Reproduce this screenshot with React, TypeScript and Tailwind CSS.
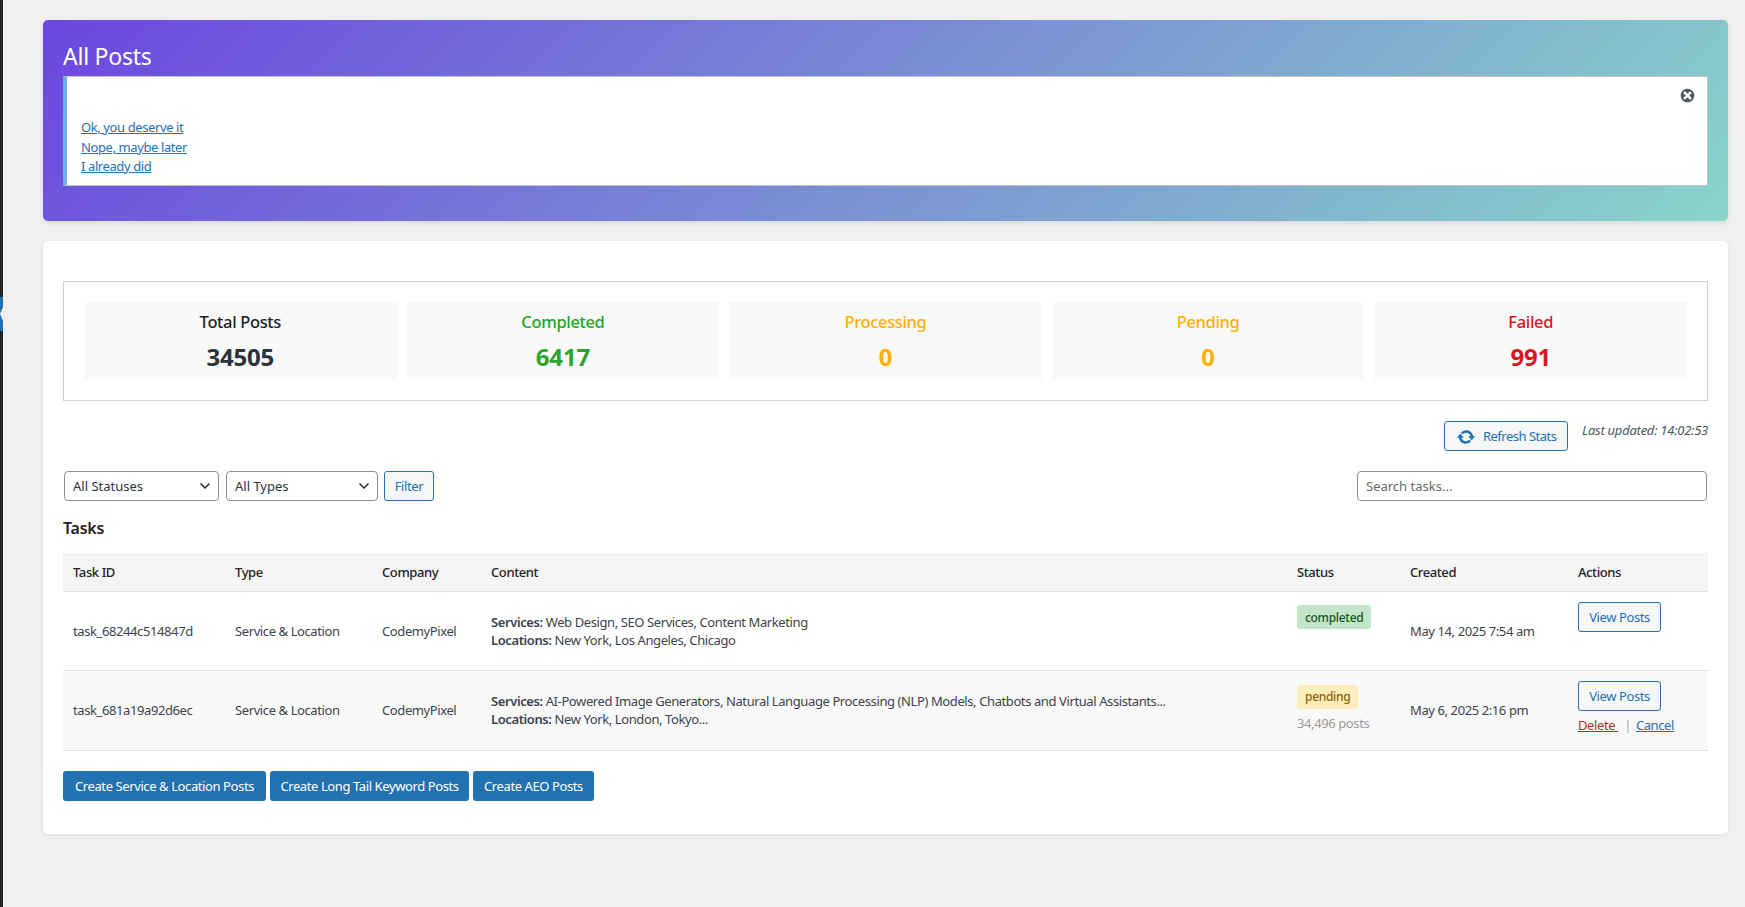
import React from "react";
import { ChevronDown } from "lucide-react";

const stats = [
  { label: "Total Posts", value: "34505", labelClass: "text-[#1d2327]", valueClass: "text-[#2c3338]" },
  { label: "Completed", value: "6417", labelClass: "text-[#1fa51f]", valueClass: "text-[#2ca52f]" },
  { label: "Processing", value: "0", labelClass: "text-[#ffb000]", valueClass: "text-[#ffb000]" },
  { label: "Pending", value: "0", labelClass: "text-[#ffb000]", valueClass: "text-[#ffb000]" },
  { label: "Failed", value: "991", labelClass: "text-[#d9161f]", valueClass: "text-[#d9161f]" },
];

const Select = ({ label, className }: { label: string; className: string }) => (
  <div className={`relative ${className}`}>
    <select className="h-[30px] w-full appearance-none rounded-[4px] border border-[#8c8f94] bg-white pl-2 pr-6 pt-px text-[13px] tracking-normal text-[#2c3338]">
      <option>{label}</option>
    </select>
    <ChevronDown className="pointer-events-none absolute right-[6px] top-[7px] h-4 w-4 text-[#2c3338]" strokeWidth={2.5} />
  </div>
);

const OutlineButton = ({ children, className = "" }: { children: React.ReactNode; className?: string }) => (
  <button className={`rounded-[3px] border border-[#2271b1] bg-[#f6f7f7] pt-[2px] text-[13px] text-[#2271b1] ${className}`}>
    {children}
  </button>
);

const Cell = ({ children, className = "" }: { children: React.ReactNode; className?: string }) => (
  <td className={`px-[10px] text-[13px] text-[#3c434a] ${className}`}>{children}</td>
);

export default function App() {
  return (
    <div className="flex min-h-screen bg-[#f0f0f0] font-['Noto_Sans',sans-serif] tracking-[-0.4px]">
      {/* Admin menu edge */}
      <div className="flex w-[3px] shrink-0 flex-col bg-[#1d2327] pt-[297px]">
        <svg viewBox="0 0 3 34" className="block h-[34px] w-[3px]">
          <rect width="3" height="34" fill="#2271b1" />
          <polygon points="3,10 0,17 3,24" fill="#f0f0f0" />
        </svg>
      </div>

      <main className="min-w-0 flex-1 pl-[40px] pr-[17px] pt-[20px]">
        {/* Header */}
        <header className="h-[201px] rounded-[5px] bg-[linear-gradient(135deg,#6c46e0,#88d5c9)] px-5 pt-[20px] shadow-[0_2px_5px_rgba(0,0,0,0.1)]">
          <h1 className="h-[36px] text-[23px] leading-[32px] tracking-[-0.25px] text-white">All Posts</h1>
          <div className="relative h-[110px] border border-l-4 border-[#c3c4c7] border-l-[#72aee6] bg-white pl-[14px] pt-[41px] text-[13px] leading-[19.5px]">
            <a href="#" className="block w-fit text-[#2271b1] underline">Ok, you deserve it</a>
            <a href="#" className="block w-fit text-[#2271b1] underline">Nope, maybe later</a>
            <a href="#" className="block w-fit text-[#2271b1] underline">I already did</a>
            <svg viewBox="0 0 20 20" className="absolute right-[11px] top-[10px] h-[17px] w-[17px]" fill="#50575e">
              <path d="M10 2c4.42 0 8 3.58 8 8s-3.58 8-8 8-8-3.58-8-8 3.58-8 8-8zm5 11l-3-3 3-3-2-2-3 3-3-3-2 2 3 3-3 3 2 2 3-3 3 3z" />
            </svg>
          </div>
        </header>

        {/* Card */}
        <section className="mt-5 h-[593px] rounded-[5px] bg-white px-5 pt-10 shadow-[0_1px_4px_rgba(0,0,0,0.08)]">
          <div className="grid h-[120px] grid-cols-5 gap-[10px] border border-[#ccd0d4] px-5 pt-5">
            {stats.map((s) => (
              <div key={s.label} className="flex h-[78px] flex-col items-center bg-[#f9f9f9] pt-[9px]">
                <div className={`text-[16.5px] font-medium leading-[22px] tracking-[-0.35px] ${s.labelClass}`}>{s.label}</div>
                <div className={`mt-[8px] text-[24px] font-bold leading-[32px] tracking-[-0.2px] ${s.valueClass}`}>{s.value}</div>
              </div>
            ))}
          </div>

          <div className="mt-5 flex items-start justify-end">
            <OutlineButton className="flex h-[30px] w-[124px] items-center gap-[7px] pl-[11px] tracking-[-0.5px]">
              <svg viewBox="0 0 20 20" className="h-[20px] w-[20px]" fill="#2271b1">
                <path d="M10.2 3.28c3.53 0 6.43 2.61 6.92 6h2.08l-3.5 4-3.5-4h2.32c-.45-1.97-2.21-3.45-4.32-3.45-1.45 0-2.73.71-3.54 1.78L4.95 5.66C6.23 4.2 8.11 3.28 10.2 3.28zm-.4 13.44c-3.52 0-6.43-2.61-6.92-6H.8l3.5-4c1.17 1.33 2.33 2.67 3.5 4H5.48c.45 1.97 2.21 3.45 4.32 3.45 1.45 0 2.73-.71 3.54-1.78l1.71 1.95c-1.28 1.46-3.15 2.38-5.25 2.38z" />
              </svg>
              Refresh Stats
            </OutlineButton>
            <span className="ml-[14px] text-[13px] italic leading-[18px] tracking-[-0.25px] text-[#50575e]">Last updated: 14:02:53</span>
          </div>

          <div className="mt-5 flex items-center justify-between pl-px pr-px">
            <div className="flex items-center gap-[7px]">
              <Select label="All Statuses" className="w-[155px]" />
              <Select label="All Types" className="w-[152px]" />
              <OutlineButton className="-ml-px h-[30px] w-[50px]">Filter</OutlineButton>
            </div>
            <input
              placeholder="Search tasks..."
              className="h-[30px] w-[350px] rounded-[4px] border border-[#8c8f94] bg-white px-2 text-[13px] tracking-normal text-[#2c3338] placeholder:text-[#646970]"
            />
          </div>

          <h2 className="mt-[15px] text-[16px] font-semibold leading-[24px] tracking-[-0.25px] text-[#1d2327]">Tasks</h2>

          <table className="mt-[13px] w-full table-fixed border-collapse text-left">
            <colgroup>
              <col className="w-[162px]" />
              <col className="w-[147px]" />
              <col className="w-[109px]" />
              <col />
              <col className="w-[113px]" />
              <col className="w-[168px]" />
              <col className="w-[140px]" />
            </colgroup>
            <thead>
              <tr className="h-[38.5px] border-b border-[#e0e0e0] bg-[#f5f5f5] text-[13px] font-medium text-[#1d2327]">
                <th className="px-[10px] pt-[2px] font-medium">Task ID</th>
                <th className="px-[10px] pt-[2px] font-medium">Type</th>
                <th className="px-[10px] pt-[2px] font-medium">Company</th>
                <th className="px-[10px] pt-[2px] font-medium">Content</th>
                <th className="px-[10px] pt-[2px] font-medium">Status</th>
                <th className="px-[10px] pt-[2px] font-medium">Created</th>
                <th className="px-[10px] pt-[2px] font-medium">Actions</th>
              </tr>
            </thead>
            <tbody>
              <tr className="h-[78.5px] border-b border-[#e0e0e0]">
                <Cell className="pt-[2px]">task_68244c514847d</Cell>
                <Cell className="pt-[2px]">Service &amp; Location</Cell>
                <Cell className="pt-[2px]">CodemyPixel</Cell>
                <Cell className="leading-[18px]">
                  <div><strong className="font-semibold">Services:</strong> Web Design, SEO Services, Content Marketing</div>
                  <div><strong className="font-semibold">Locations:</strong> New York, Los Angeles, Chicago</div>
                </Cell>
                <Cell className="pt-[13px] align-top">
                  <span className="inline-block rounded-[3px] bg-[#c3e6cb] px-2 pt-px text-[12px] font-medium leading-[23px] tracking-[-0.3px] text-[#155724]">completed</span>
                </Cell>
                <Cell className="pt-[2px]">May 14, 2025 7:54 am</Cell>
                <Cell className="pt-[10px] align-top">
                  <OutlineButton className="h-[30px] w-[83px]">View Posts</OutlineButton>
                </Cell>
              </tr>
              <tr className="h-[80.5px] border-b border-[#e0e0e0] bg-[#f9f9f9]">
                <Cell>task_681a19a92d6ec</Cell>
                <Cell>Service &amp; Location</Cell>
                <Cell>CodemyPixel</Cell>
                <Cell className="leading-[18px]">
                  <div><strong className="font-semibold">Services:</strong> AI-Powered Image Generators, Natural Language Processing (NLP) Models, Chatbots and Virtual Assistants...</div>
                  <div><strong className="font-semibold">Locations:</strong> New York, London, Tokyo...</div>
                </Cell>
                <Cell className="pt-[14px] align-top">
                  <span className="inline-block rounded-[3px] bg-[#ffeeba] px-2 text-[12px] font-medium leading-[24px] tracking-[-0.3px] text-[#856404]">pending</span>
                  <div className="mt-[5px] text-[13px] leading-[18px] text-[#999999]">34,496 posts</div>
                </Cell>
                <Cell>May 6, 2025 2:16 pm</Cell>
                <Cell className="pt-[10px] align-top">
                  <OutlineButton className="h-[30px] w-[83px]">View Posts</OutlineButton>
                  <div className="mt-[5px] flex items-center text-[13px] leading-[18px]">
                    <a href="#" className="text-[#b32d2e] underline">Delete&nbsp;</a>
                    <span className="ml-[6px] mr-[5px] text-[#a7aaad]">|</span>
                    <a href="#" className="text-[#2271b1] underline">Cancel</a>
                  </div>
                </Cell>
              </tr>
            </tbody>
          </table>

          <div className="mt-5 flex gap-1">
            <button className="h-[30px] w-[203px] rounded-[3px] bg-[#2271b1] pt-[2px] text-[13px] text-white">Create Service &amp; Location Posts</button>
            <button className="h-[30px] w-[199px] rounded-[3px] bg-[#2271b1] pt-[2px] text-[13px] text-white">Create Long Tail Keyword Posts</button>
            <button className="h-[30px] w-[121px] rounded-[3px] bg-[#2271b1] pt-[2px] text-[13px] text-white">Create AEO Posts</button>
          </div>
        </section>
      </main>
    </div>
  );
}
